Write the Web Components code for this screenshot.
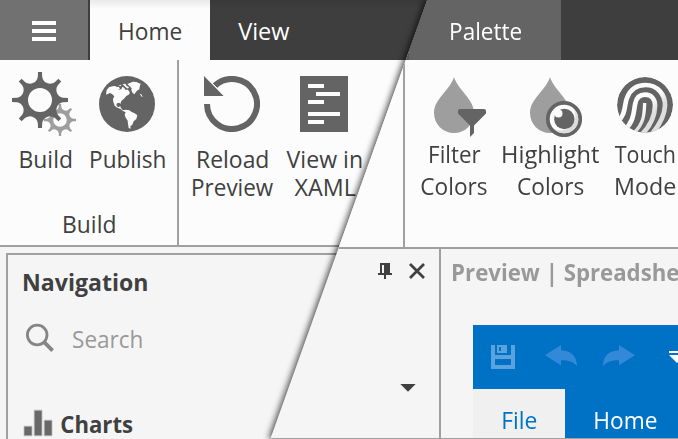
<!DOCTYPE html>
<html lang="en">
<head>
<meta charset="utf-8">
<title>Designer</title>
<style>
  html, body { margin: 0; height: 100%; overflow: hidden; background: #f5f5f5; }
  body { font: 24px "Open Sans", "Noto Sans", sans-serif; color: #404040; }
</style>
</head>
<body>
<designer-app></designer-app>
<script>
const ctx = document.createElement('canvas').getContext('2d');

/* A single line of text, condensed horizontally to the ink width given in "w"; "dx" nudges it sideways. */
class UiText extends HTMLElement {
  connectedCallback() {
    const text = this.textContent, bold = this.hasAttribute('bold');
    const size = +(this.getAttribute('size') || 23.6);
    ctx.font = `${bold ? 700 : 400} ${size}px "Open Sans", "Noto Sans", sans-serif`;
    const m = ctx.measureText(text);
    const w = +this.getAttribute('w');
    const scale = w / (m.actualBoundingBoxRight + m.actualBoundingBoxLeft);
    const shift = m.actualBoundingBoxLeft * scale + +(this.getAttribute('dx') || 1);
    this.attachShadow({mode: 'open'}).innerHTML = `<style>
      :host { display: block; flex: none; width: ${w}px; height: var(--line, 32px); line-height: var(--line, 32px);
        font-size: ${size}px; font-weight: ${bold ? 700 : 400}; white-space: nowrap; }
      span { display: inline-block; transform-origin: 0 50%; transform: translateX(${shift}px) scaleX(${scale}); }
    </style><span><slot></slot></span>`;
  }
}
customElements.define('ui-text', UiText);

function gear(cx, cy, k, hole, color) {
  let d = '';
  for (let i = 0; i < 8; i++) {
    const a = i * Math.PI / 4;
    const p = (x, y, t) => `${(cx + k * (x * Math.cos(t) - y * Math.sin(t))).toFixed(2)} ${(cy + k * (x * Math.sin(t) + y * Math.cos(t))).toFixed(2)}`;
    d += `${i ? 'L' : 'M'}${p(-2, -28, a)}L${p(2, -28, a)}L${p(2.2, -23, a)}A${8 * k} ${8 * k} 0 0 0 ${p(-2.2, -23, a + Math.PI / 4)}`;
  }
  const h = hole;
  return `<path fill="${color}" fill-rule="evenodd" d="${d}ZM${cx - h} ${cy}a${h} ${h} 0 1 0 ${2 * h} 0a${h} ${h} 0 1 0 ${-2 * h} 0Z"/>`;
}
const drop = x => `<path fill="#9e9e9e" d="M${x} 77C${x + 4} 90 ${x + 20} 99 ${x + 20} 113A20 20 0 0 1 ${x - 20} 113C${x - 20} 99 ${x - 4} 90 ${x} 77Z"/>`;

const ICONS = {
  menu: ['32 21 24 20', '<path fill="#fff" d="M32 21h24v4H32zM32 29h24v4H32zM32 37h24v4H32z"/>'],
  gears: ['12 72 64 64', gear(60, 120, 16 / 28, 6.8, '#9e9e9e') + gear(40, 100, 1, 12, '#646464')],
  globe: ['99 76 56 56', `<circle cx="127" cy="104" r="28" fill="#646464"/><g transform="translate(0 60) scale(.33333)" fill="#fcfcfc">
    <path d="M318 104L320 90 327 82 337 79 345 78 351 81 356 80 360 86 353 90 364 88 367 80 373 84 376 89 384 89 389 97 388 103 379 108 372 116 364 123 361 132 358 128 351 130 349 135 354 142 361 139 363 145 369 151 378 149 388 151 395 156 404 160 412 166 409 177 401 184 397 194 391 199 392 206 386 204 384 192 383 182 376 171 374 163 377 157 369 153 362 147 352 143 344 137 340 126 339 117 343 109 336 102 330 99Z"/>
    <path d="M382 72L392 68 398 65 410 66 415 69 422 71 419 80 418 88 410 93 403 103 398 99 394 91 395 85 389 79Z"/>
    <path d="M356 76l9-2-4 5zM368 72l8-1 4 7 7 3-3 5-8-5zM419 101l5 2 4 8-3-1z"/></g>`],
  reload: ['204 76 56 56', '<path d="M207 104A25 25 0 1 0 214.6 86" fill="none" stroke="#646464" stroke-width="6"/><path d="M203.4 74.4L225.6 96.6" stroke="#fcfcfc" stroke-width="1"/><path d="M204 76V96H223.6Z" fill="#646464"/>'],
  xaml: ['300 76 48 56', '<path fill="#646464" d="M300 76h48v56h-48z"/><path fill="#fcfcfc" d="M308 84h16v4h-16zM316 92h24v4h-24zM308 100h16v4h-16zM308 112h32v4h-32zM308 120h16v4h-16z"/>'],
  filter: ['422 77 64 60', drop(454) + '<path fill="#646464" d="M460 109H484Q486 109 486 111V113.5L474 125.5V133L470 137V125.5L458 113.5V111Q458 109 460 109Z"/>'],
  highlight: ['518 77 64 60', drop(550) + `<circle cx="564" cy="119" r="16.2" fill="#fcfcfc" stroke="#646464" stroke-width="3.8"/>
    <path fill="#dcdcdc" d="M574 109.5A13.6 13.6 0 0 1 555 129.5A15 15 0 0 0 574 109.5Z"/><circle cx="564.3" cy="119" r="10.2" fill="#646464"/><circle cx="558.5" cy="113.5" r="4" fill="#fcfcfc"/>`],
  touch: ['617 77 56 56', `<defs><clipPath id="c"><circle cx="135" cy="120" r="84"/></clipPath><linearGradient id="g" gradientUnits="userSpaceOnUse" x1="140" y1="100" x2="182" y2="140"><stop offset=".3" stop-color="#fcfcfc"/><stop offset=".8" stop-color="#dedede"/></linearGradient></defs>
    <g transform="translate(600 65) scale(.33333)"><g clip-path="url(#c)"><circle cx="135" cy="120" r="84" fill="#646464"/>
    <g fill="none" stroke="url(#g)" stroke-width="14"><path d="M50 172C80 148 72 118 81 99C90 74 110 60 137 60C172 60 196 88 195 122C194 154 178 180 156 207"/>
    <path d="M74 194C104 170 101 133 106 115C109 98 119 89 135 89C155 89 166 103 165 124C164 155 150 184 124 210"/>
    <path stroke-width="10" d="M99 206C132 178 133 148 134 114"/></g></g></g>`],
  pin: ['378 263 14 16', '<path fill="#404040" fill-rule="evenodd" d="M380 263h10v10h2v2h-6v4h-2v-4h-6v-2h2zM382 265h2v8h-2z"/>'],
  close: ['409 263 16 16', '<path d="M410 264L424 278M424 264L410 278" stroke="#404040" stroke-width="2.8"/>'],
  caret: ['400 384 16 8', '<path fill="#404040" d="M400.3 384h15.4l-7.7 7.8z"/>'],
  search: ['25 323 30 30', '<circle cx="37.2" cy="335" r="9.8" fill="none" stroke="#858585" stroke-width="2.8"/><path d="M44.2 342.2L52.6 350.6" stroke="#858585" stroke-width="3.8"/>'],
  chart: ['23 408 30 28', '<path fill="#686868" stroke="#bcbcbc" stroke-width=".8" d="M24 425.2h8v9.6h-8zM34.2 409.2h7.8v25.6h-7.8zM44.2 419.2h7.8v15.6h-7.8z"/>'],
  save: ['491 345 24 24', '<path fill="#5ba3df" fill-rule="evenodd" d="M491 345h4v10h16v-10h4v24h-24zM495 359v6h16v-6zM497 345h10v8h-10zM499 347v4h2v-4z"/>'],
  undo: ['545 345 32 22', '<path fill="#3389d7" d="M545 355.2L561 345V350.2C571 350.6 577 356 577 366.2C573 361.5 568 360.2 561 360.3V365.3Z"/>'],
  redo: ['603 345 32 22', '<path fill="#3389d7" d="M635 355.2L619 345V350.2C609 350.6 603 356 603 366.2C607 361.5 612 360.2 619 360.3V365.3Z"/>'],
  more: ['669 351 16 12', '<path fill="#fff" d="M669 351h16v2h-16zM669 355h16l-8 8z"/>']
};

class UiIcon extends HTMLElement {
  connectedCallback() {
    const [box, body] = ICONS[this.getAttribute('name')];
    const [, , w, h] = box.split(' ');
    this.attachShadow({mode: 'open'}).innerHTML = `<style>:host { display: block; flex: none; width: ${w}px; height: ${h}px } svg { display: block }</style>
      <svg width="${w}" height="${h}" viewBox="${box}">${body}</svg>`;
  }
}
customElements.define('ui-icon', UiIcon);

/* Large ribbon command: icon above one or two centred label lines. */
class RibbonButton extends HTMLElement {
  connectedCallback() {
    this.attachShadow({mode: 'open'}).innerHTML = `<style>
      :host { display: flex; flex: none; flex-direction: column; align-items: center; }
      .icon { height: var(--icon-row); display: flex; align-items: var(--icon-align, center); }
    </style><div class="icon"><slot name="icon"></slot></div><slot></slot>`;
  }
}
customElements.define('ribbon-button', RibbonButton);

class LeftWindow extends HTMLElement {
  connectedCallback() {
    this.attachShadow({mode: 'open'}).innerHTML = `<style>
      :host { display: flex; flex-direction: column; width: 678px; height: 439px; background: #f5f5f5; }
      * { box-sizing: border-box; }
      header { display: flex; height: 60px; background: #3e3e3e; color: #fff; flex: none; }
      .menu { width: 90px; background: #717171; border-right: 2px solid #3e3e3e; display: grid; place-items: center; padding-top: 2px; }
      .bar { flex: 1; display: flex; background: linear-gradient(rgba(0,0,0,.09), transparent 9px); }
      .tab { width: 120px; padding: 15px 0 0 29px; }
      .tab.on { background: linear-gradient(#e9e9e9, #fcfcfc 9px); color: #404040; }
      .ribbon { display: flex; height: 187px; background: #fcfcfc; border-bottom: 2px solid #a0a0a0; flex: none; }
      .group { display: flex; flex-direction: column; padding: 12px 0 0 4px; width: 179px; border-right: 2px solid #a0a0a0; }
      .group.b { padding-left: 5px; border: 0; }
      .row { display: flex; height: 136px; --icon-row: 64px; }
      ribbon-button { --line: 28px; }
      .gap { height: 8.5px; }
      .caption { margin-left: 59px; }
      .panel { flex: 1; margin: 6px 0 0 6px; border: solid #a0a0a0; border-width: 2px 0 0 2px; padding: 11px 0 0 15px; display: flex; flex-direction: column; }
      .search { display: flex; margin-top: 25px; padding-left: 2px; gap: 17px; color: #999; }
      .item { display: flex; margin-top: 53px; gap: 8px; }
      .item ui-icon { margin-top: 1px; }
    </style>
    <header><div class="menu"><ui-icon name="menu"></ui-icon></div>
      <div class="bar"><div class="tab on"><ui-text w="62">Home</ui-text></div><div class="tab" style="padding-left:28px"><ui-text w="51" dx="0.2">View</ui-text></div></div></header>
    <div class="ribbon">
      <div class="group"><div class="row">
        <ribbon-button style="width:80px"><ui-icon slot="icon" name="gears"></ui-icon><div class="gap"></div><ui-text w="51" dx="1.5">Build</ui-text></ribbon-button>
        <ribbon-button style="width:86px"><ui-icon slot="icon" name="globe"></ui-icon><div class="gap"></div><ui-text w="74" dx="1">Publish</ui-text></ribbon-button></div>
        <ui-text class="caption" w="51">Build</ui-text></div>
      <div class="group b"><div class="row">
        <ribbon-button style="width:96px"><ui-icon slot="icon" name="reload"></ui-icon><div class="gap"></div><ui-text w="70">Reload</ui-text><ui-text w="80">Preview</ui-text></ribbon-button>
        <ribbon-button style="width:88px"><ui-icon slot="icon" name="xaml"></ui-icon><div class="gap"></div><ui-text w="75" dx="-.4">View in</ui-text><ui-text w="61" dx=".5">XAML</ui-text></ribbon-button></div></div>
    </div>
    <div class="panel"><ui-text bold w="123">Navigation</ui-text>
      <div class="search"><ui-icon name="search"></ui-icon><ui-text w="69">Search</ui-text></div>
      <div class="item"><ui-icon name="chart"></ui-icon><ui-text bold w="71" dx=".3">Charts</ui-text></div></div>`;
  }
}
customElements.define('left-window', LeftWindow);

class RightWindow extends HTMLElement {
  connectedCallback() {
    this.attachShadow({mode: 'open'}).innerHTML = `<style>
      :host { display: block; filter: drop-shadow(-1.5px 0 3.2px rgba(0,0,0,.68)); }
      * { box-sizing: border-box; }
      .cut { width: 678px; height: 439px; background: #f5f5f5; clip-path: polygon(427.2px 0, 678px 0, 678px 439px, 270.3px 439px); display: flex; flex-direction: column; overflow: hidden; border-bottom: 1px solid #a0a0a0; }
      header { display: flex; height: 60px; padding-left: 409px; background: linear-gradient(90deg, #555 409px, #3e3e3e 409px); color: #fff; flex: none; }
      .tab { width: 152px; padding: 15px 0 0 41px; background: #646464; }
      .ribbon { display: flex; height: 189px; background: #fcfcfc; border-bottom: 2px solid #a0a0a0; padding-left: 403px; flex: none; }
      .group { border-left: 2px solid #a0a0a0; padding: 17px 0 0 2px; display: flex; --icon-row: 61px; --icon-align: flex-start; }
      .body { flex: 1; display: flex; min-height: 0; }
      .nav { width: 441px; border-right: 2px solid #a0a0a0; padding: 14px 14px 0 0; display: flex; flex-direction: column; align-items: flex-end; }
      .tools { display: flex; gap: 17px; }
      .nav .caret { margin: 105px 9px 0 0; }
      .doc { flex: 1; padding: 7px 0 0 11px; color: #999; min-width: 0; }
      .app { margin: 37px 0 0 21px; background: #0072c6; width: 240px; color: #fff; }
      .quick { display: flex; height: 64px; padding: 20px 0 0 18px; }
      .tabs { display: flex; height: 50px; }
      .tabs div { width: 92px; padding: 15px 0 0 30px; }
      .tabs .file { background: #f0f0f0; color: #0072c6; }
    </style>
    <div class="cut">
      <header><div class="tab"><ui-text w="71">Palette</ui-text></div></header>
      <div class="ribbon"><div class="group">
        <ribbon-button style="width:94px"><ui-icon slot="icon" name="filter"></ui-icon><ui-text w="51">Filter</ui-text><ui-text w="66" dx=".3">Colors</ui-text></ribbon-button>
        <ribbon-button style="width:98px"><ui-icon slot="icon" name="highlight"></ui-icon><ui-text w="96">Highlight</ui-text><ui-text w="66">Colors</ui-text></ribbon-button>
        <ribbon-button style="width:92px"><ui-icon slot="icon" name="touch"></ui-icon><ui-text w="60" dx="-.3">Touch</ui-text><ui-text w="60">Mode</ui-text></ribbon-button></div></div>
      <div class="body">
        <div class="nav"><div class="tools"><ui-icon name="pin"></ui-icon><ui-icon name="close"></ui-icon></div><ui-icon class="caret" name="caret"></ui-icon></div>
        <div class="doc"><ui-text bold w="249">Preview | Spreadsheet</ui-text>
          <div class="app">
            <div class="quick"><ui-icon name="save"></ui-icon><ui-icon name="undo" style="margin-left:30px"></ui-icon><ui-icon name="redo" style="margin-left:26px"></ui-icon><ui-icon name="more" style="margin:6px 0 0 34px"></ui-icon></div>
            <div class="tabs"><div class="file"><ui-text w="34" dx=".2">File</ui-text></div><div><ui-text w="62" dx=".2">Home</ui-text></div></div>
          </div></div>
      </div>
    </div>`;
  }
}
customElements.define('right-window', RightWindow);

/* Two windows stacked in one cell; the right one is cut diagonally. */
class DesignerApp extends HTMLElement {
  connectedCallback() {
    this.attachShadow({mode: 'open'}).innerHTML = `<style>
      :host { display: grid; width: 678px; height: 439px; overflow: hidden; }
      left-window, right-window { grid-area: 1 / 1; }
    </style><left-window></left-window><right-window></right-window>`;
  }
}
customElements.define('designer-app', DesignerApp);
</script>
</body>
</html>
